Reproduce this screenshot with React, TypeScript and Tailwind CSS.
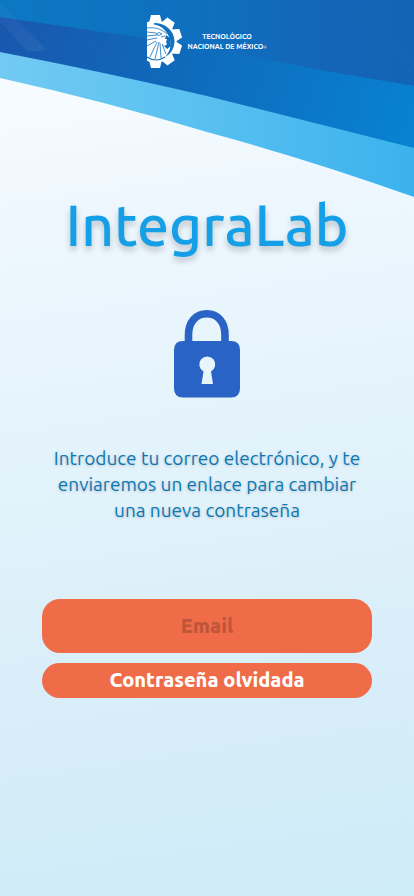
import React from "react";

function Backdrop() {
  return (
    <svg
      className="h-50 w-full [grid-area:1/1]"
      viewBox="0 0 414 200"
      preserveAspectRatio="none"
      aria-hidden="true"
    >
      <defs>
        <linearGradient id="top" x1="0" y1="0" x2="1" y2="0">
          <stop offset="0" stopColor="#0c78c4" />
          <stop offset="0.5" stopColor="#0f6fbf" />
          <stop offset="0.8" stopColor="#1465b7" />
          <stop offset="1" stopColor="#1464b6" />
        </linearGradient>
        <linearGradient id="deep" gradientUnits="userSpaceOnUse" x1="0" y1="20" x2="400" y2="150">
          <stop offset="0" stopColor="#1a57ae" />
          <stop offset="0.3" stopColor="#1264b7" />
          <stop offset="0.6" stopColor="#0d70c0" />
          <stop offset="1" stopColor="#0881d1" />
        </linearGradient>
        <linearGradient id="sky" x1="0" y1="0" x2="1" y2="0">
          <stop offset="0" stopColor="#72caf2" />
          <stop offset="0.5" stopColor="#58c0f0" />
          <stop offset="1" stopColor="#3bb2ed" />
        </linearGradient>
        <linearGradient id="ray" x1="0" y1="0" x2="1" y2="1">
          <stop offset="0" stopColor="#fff" stopOpacity="0.02" />
          <stop offset="1" stopColor="#fff" stopOpacity="0.06" />
        </linearGradient>
      </defs>
      <path d="M0 0H414V197Q310 160 207 132Q104 101 0 78Z" fill="url(#sky)" />
      <path d="M0 0H414V148Q310 122 207 96Q104 72 0 52Z" fill="url(#deep)" />
      <path d="M0 0H414V86L320 70Q225 50 137 37L0 17Z" fill="url(#top)" />
      <path d="M0 3L47 50L28 52L0 22Z" fill="url(#ray)" />
      <path d="M346 0L414 65" stroke="#fff" strokeOpacity="0.05" />
    </svg>
  );
}

const toothAngles = [0, 36, 72, 108, 144, 180];

function Emblem() {
  return (
    <svg className="h-[53px] w-9" viewBox="0 0 36 53" aria-hidden="true">
      <g fill="#fff">
        <circle cx="8.5" cy="26.5" r="21" />
        {toothAngles.map((angle) => (
          <path key={angle} d="M2 8L4 0H13L15 8Z" transform={`rotate(${angle} 8.5 26.5)`} />
        ))}
      </g>
      <path
        fill="#1070bf"
        d="M7 8C18 8 27 15 27.5 26C27.5 33 24 39 18 42C22 38 24 33 23.5 27C22 18 16 11 7 9.5Z"
      />
      <path
        fill="#1070bf"
        d="M19 20L23 23L24 31L20 34L16 30L18 28L16 26L18 24Z"
      />
      <path fill="#fff" d="M16 24L20 24L19 27L20 29L18 31L15 29Z" />
      <g fill="none" stroke="#1070bf" strokeWidth="0.8">
        <path d="M0 13C8 12 15 14 20 19M0 17L9 18M0 21L10 20M0 25L10 23M0 31L9 26" />
        <path d="M3 42L10 27M8 44L12 27M14 43L13 28M19 39L15 29" />
        <path d="M9 19Q12 22 15 19Q12 16 9 19M14 22L18 21" />
      </g>
      <path d="M0 42Q9 48 18 42" fill="none" stroke="#1070bf" strokeWidth="1.2" />
    </svg>
  );
}

function PadLock() {
  return (
    <svg className="h-[88px] w-[66px]" viewBox="0 0 66 88" aria-hidden="true">
      <path
        d="M14.5 34V25C14.5 12 22 3.8 32.8 3.8S51 12 51 25V34"
        fill="none"
        stroke="#2a63c6"
        strokeWidth="7.6"
      />
      <path
        fill="#2a63c6"
        fillRule="evenodd"
        d="M9 31H57Q66 31 66 40V78.5Q66 87.5 57 87.5H9Q0 87.5 0 78.5V40Q0 31 9 31ZM29.5 61.5L27.5 74H39L37 61.5A8 8 0 1 0 29.5 61.5Z"
      />
    </svg>
  );
}

export default function App() {
  return (
    <div className="grid min-h-screen grid-cols-1 items-start bg-[linear-gradient(172deg,#f5fbfe_12%,#eef7fe_24%,#e3f3fb_50%,#d7edf9_78%,#ceebf8_100%)] font-['Ubuntu','Noto_Sans',sans-serif]">
      <Backdrop />
      <div className="flex flex-col items-center [grid-area:1/1]">
        <header className="flex items-center gap-1 pt-[15px] text-white">
          <Emblem />
          <p className="text-center text-[7px] leading-[10px] font-bold">
            TECNOLÓGICO
            <br />
            NACIONAL DE MÉXICO
            <span className="text-[4px] font-normal">®</span>
          </p>
        </header>
        <main className="flex w-full flex-col items-center px-[42px]">
          <h1 className="mt-[119px] text-[57px] leading-[76px] font-medium text-[#159fe6] [text-shadow:0_4px_6px_rgba(0,0,0,0.22)]">
            IntegraLab
          </h1>
          <div className="mt-[47px]">
            <PadLock />
          </div>
          <p className="mt-[47px] max-w-[310px] text-center text-[19px] leading-[26px] text-[#0b78b3] [text-shadow:0_1px_3px_rgba(0,0,0,0.2)]">
            Introduce tu correo electrónico, y te enviaremos un enlace para cambiar una nueva contraseña
          </p>
          <form className="mt-[76px] flex w-full flex-col gap-[10px]" onSubmit={(e) => e.preventDefault()}>
            <input
              type="email"
              aria-label="Email"
              placeholder="Email"
              className="h-[54px] w-full rounded-[18px] bg-[#f06c48] pb-[2px] text-center text-xl font-extrabold text-white outline-none placeholder:text-[#bd563a]"
            />
            <button type="submit" className="h-[35px] w-full rounded-[18px] bg-[#f06c48] pb-[2px] text-xl leading-[26px] font-extrabold text-white">
              Contraseña olvidada
            </button>
          </form>
        </main>
      </div>
    </div>
  );
}
